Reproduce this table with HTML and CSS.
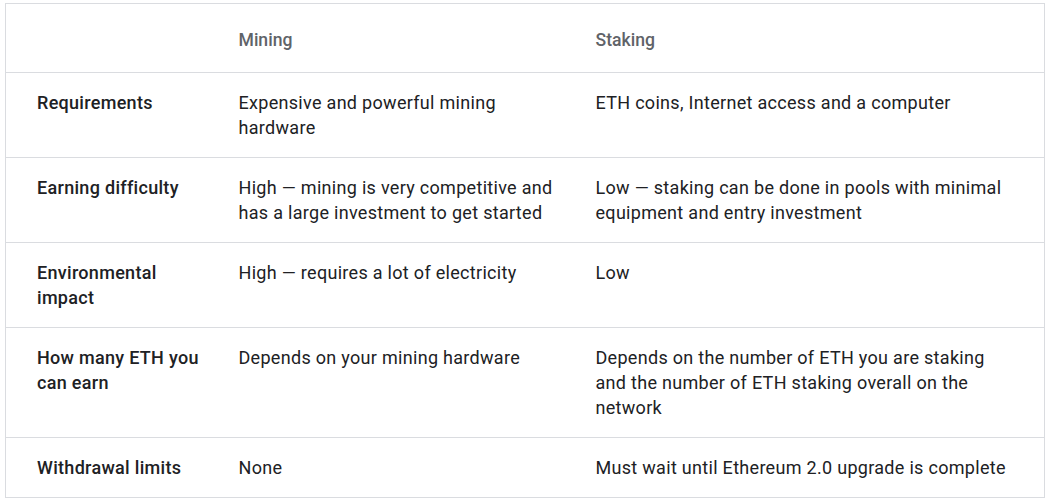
FILE: index.html
```html
<!DOCTYPE html>
<html lang="en">
<head>
<meta charset="utf-8">
<title>Mining vs Staking</title>
<link rel="stylesheet" href="styles.css">
</head>
<body>
<div class="wrap">
<table class="compare">
  <colgroup>
    <col class="c1">
    <col class="c2">
    <col class="c3">
  </colgroup>
  <thead>
    <tr>
      <th></th>
      <th>Mining</th>
      <th>Staking</th>
    </tr>
  </thead>
  <tbody>
    <tr>
      <td class="label">Requirements</td>
      <td>Expensive and powerful mining hardware</td>
      <td>ETH coins, Internet access and a computer</td>
    </tr>
    <tr>
      <td class="label">Earning difficulty</td>
      <td>High — mining is very competitive and has a large investment to get started</td>
      <td>Low — staking can be done in pools with minimal equipment and entry investment</td>
    </tr>
    <tr>
      <td class="label">Environmental impact</td>
      <td>High — requires a lot of electricity</td>
      <td>Low</td>
    </tr>
    <tr>
      <td class="label">How many ETH you can earn</td>
      <td>Depends on your mining hardware</td>
      <td>Depends on the number of ETH you are staking and the number of ETH staking overall on the network</td>
    </tr>
    <tr>
      <td class="label">Withdrawal limits</td>
      <td>None</td>
      <td>Must wait until Ethereum 2.0 upgrade is complete</td>
    </tr>
  </tbody>
</table>
</div>
</body>
</html>
```
FILE: styles.css
```css
html, body {
  margin: 0;
  padding: 0;
  background: #ffffff;
}

.wrap {
  padding: 3px 0 0 5px;
}

.compare {
  width: 1040px;
  border-collapse: collapse;
  table-layout: fixed;
  border: 1px solid #dadce0;
  font-family: Roboto, "Liberation Sans", sans-serif;
  font-size: 18px;
  letter-spacing: 0.3px;
  line-height: 25px;
  color: #202124;
}

.c1 { width: 217px; }
.c2 { width: 357px; }
.c3 { width: auto; }

.compare th,
.compare td {
  text-align: left;
  vertical-align: top;
  padding: 17px 16px 17px 16px;
  border-bottom: 1px solid #dadce0;
}

.compare th:first-child,
.compare td:first-child {
  padding-left: 31px;
}

.compare th:last-child,
.compare td:last-child {
  padding-right: 32px;
}

.compare th {
  font-weight: 500;
  font-size: 17.6px;
  letter-spacing: 0;
  color: #5f6368;
  padding-top: 24px;
  padding-bottom: 19px;
}

.compare td.label {
  font-weight: 500;
}
```
